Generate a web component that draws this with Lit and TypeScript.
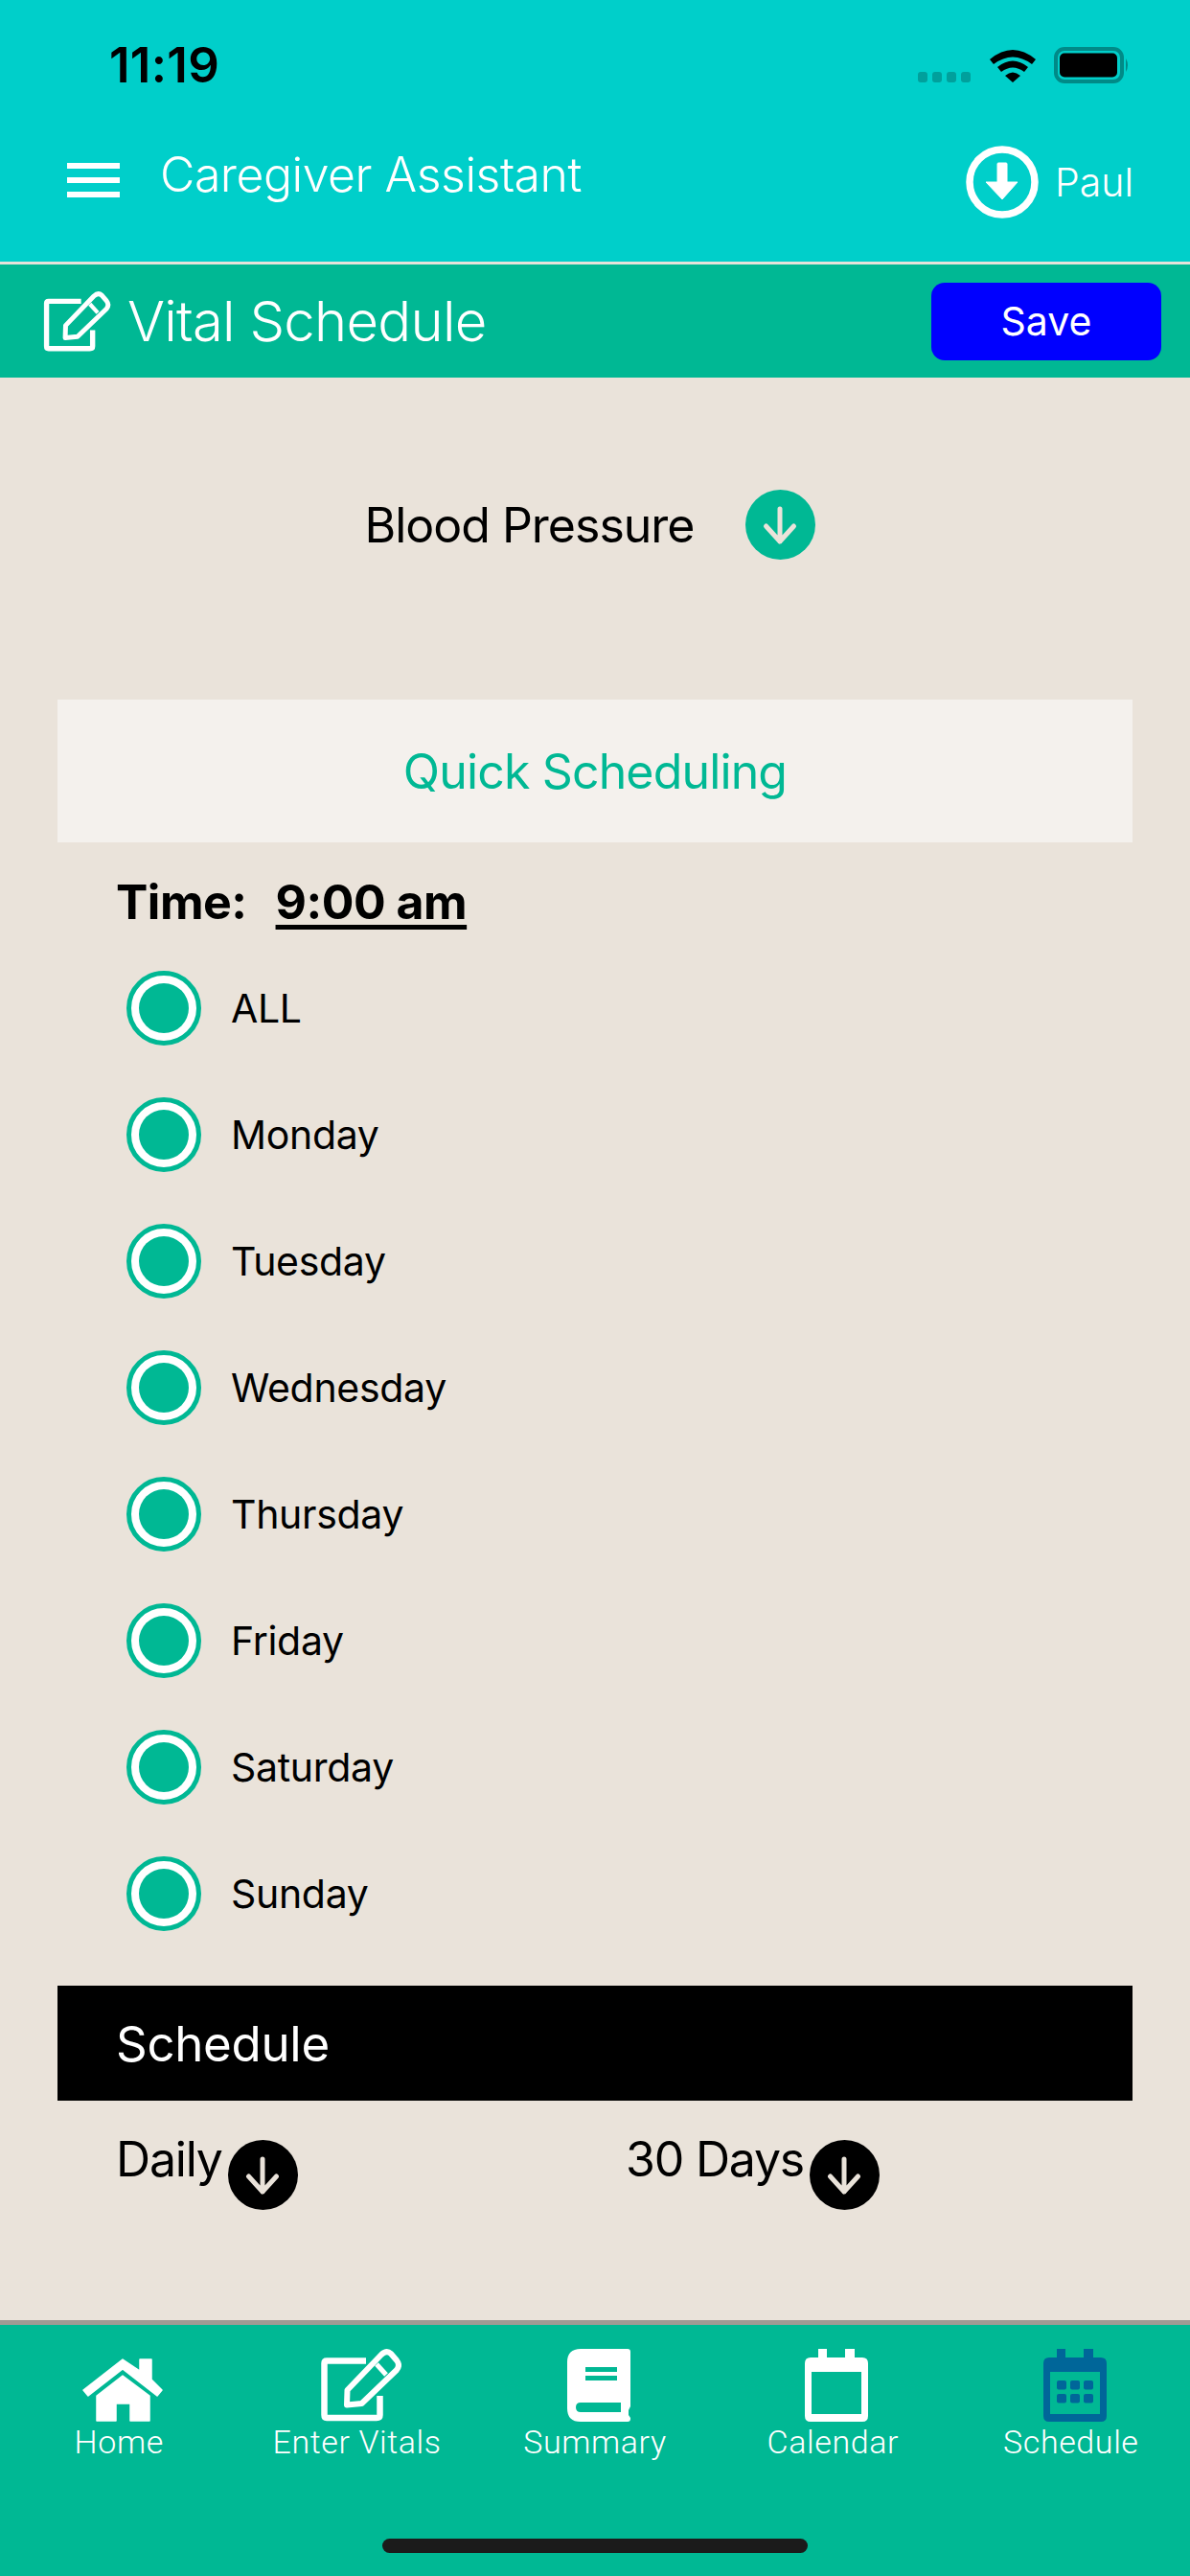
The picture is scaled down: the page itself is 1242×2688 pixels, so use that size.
import { LitElement, html, css, svg } from 'lit'
import { customElement } from 'lit/decorators.js'

const DAYS = ['ALL', 'Monday', 'Tuesday', 'Wednesday', 'Thursday', 'Friday', 'Saturday', 'Sunday']

const editPaths = svg`
	<path d="M47 12.500 H6 Q3.500 12.500 3.500 15 V69 Q3.500 72 6 72 H58 Q61.500 72 61.500 69 V49" fill="none" stroke="currentColor" stroke-width="6.500"/>
	<path d="M27.500 43 L63 6 Q68.500 1 73 5 L79 12 Q83 17 79 22 L42.500 57 L27 58.500 Z" fill="none" stroke="currentColor" stroke-width="6" stroke-linejoin="round"/>
	<path d="M58 16 L68 27" fill="none" stroke="currentColor" stroke-width="5"/>
`

const arrowDown = (color: string) => svg`
	<path d="M36 20 V54 M21.500 38 L36 54 L50.500 38" fill="none" stroke=${color} stroke-width="5" stroke-linecap="round" stroke-linejoin="round"/>
`

@customElement('app-root')
export class AppRoot extends LitElement {
	static styles = css`
		:host {
			display: flex;
			flex-direction: column;
			min-height: 100vh;
			background: #eae3da;
			font-family: Inter, 'Liberation Sans', sans-serif;
			color: #000;
		}

		.header {
			background: #00cfca;
			color: #fff;
			border-bottom: 3px solid #e6e2da;
		}

		.status {
			display: flex;
			align-items: center;
			height: 134px;
			padding: 0 64px 0 114px;
		}

		.time {
			font-size: 51px;
			font-weight: 600;
			letter-spacing: 0.3px;
			color: #000;
			flex: 1;
		}

		.status-icons {
			display: block;
			margin-top: 4px;
		}

		.nav {
			display: flex;
			align-items: center;
			height: 111px;
			padding: 0 59px 28px 70px;
		}

		.burger {
			display: flex;
			flex-direction: column;
			gap: 9px;
			width: 55px;
			margin: -4px 42px 0 0;
		}

		.burger span {
			height: 6px;
			background: #fff;
		}

		.app-name {
			flex: 1;
			font-size: 50px;
			font-weight: 300;
			letter-spacing: -0.5px;
			margin-top: -16px;
		}

		.user-icon {
			width: 76px;
			height: 76px;
			margin-right: 17px;
		}

		.user-name {
			font-size: 41px;
			font-weight: 300;
		}

		.title-bar {
			display: flex;
			align-items: center;
			height: 118px;
			padding: 0 30px 0 45px;
			background: #00b894;
			color: #fff;
		}

		.title-icon {
			width: 71px;
			height: 63px;
			margin-right: 17px;
			color: #fff;
		}

		.title {
			flex: 1;
			font-size: 58px;
			font-weight: 300;
			letter-spacing: -0.75px;
		}

		.save {
			width: 240px;
			height: 81px;
			border: none;
			border-radius: 14px;
			background: #00f;
			color: #fff;
			font-family: inherit;
			font-size: 41px;
			font-weight: 400;
		}

		.main {
			flex: 1;
			display: flex;
			flex-direction: column;
			padding: 117px 60px 0;
		}

		.picker {
			display: flex;
			align-items: center;
			justify-content: center;
			gap: 53px;
			height: 73px;
			padding-right: 11px;
			font-size: 50px;
			font-weight: 400;
			letter-spacing: -1px;
		}

		.arrow {
			width: 73px;
			height: 73px;
			flex: none;
		}

		.quick {
			display: flex;
			align-items: center;
			justify-content: center;
			height: 149px;
			margin-top: 146px;
			background: #f4f1ed;
			color: #00b894;
			font-size: 50px;
			font-weight: 400;
			letter-spacing: -0.85px;
		}

		.time-row {
			display: flex;
			gap: 30px;
			height: 56px;
			padding-left: 61px;
			margin: 34px 0 17px;
			font-size: 50px;
			font-weight: 700;
			line-height: 56px;
			letter-spacing: -0.5px;
		}

		.time-value {
			text-decoration: underline;
			text-decoration-thickness: 5px;
			text-underline-offset: 6px;
		}

		.day {
			display: flex;
			align-items: center;
			height: 132px;
			padding-left: 72px;
			font-size: 41px;
			letter-spacing: -0.3px;
		}

		.radio {
			box-sizing: border-box;
			width: 78px;
			height: 78px;
			margin-right: 31px;
			border: 5px solid #00b894;
			border-radius: 50%;
			background: #fff;
			padding: 8px;
		}

		.radio span {
			display: block;
			width: 100%;
			height: 100%;
			border-radius: 50%;
			background: #00b894;
		}

		.schedule-head {
			display: flex;
			align-items: center;
			height: 120px;
			margin-top: 30px;
			padding-left: 61px;
			background: #000;
			color: #fff;
			font-size: 51px;
			font-weight: 400;
			letter-spacing: -0.3px;
		}

		.schedule-row {
			display: grid;
			grid-template-columns: 532px 1fr;
			padding: 31px 0 0 61px;
			font-size: 50px;
			line-height: 60px;
			font-weight: 400;
			letter-spacing: -1.2px;
		}

		.option {
			display: flex;
			align-items: flex-start;
			gap: 6px;
		}

		.option .arrow {
			margin-top: 10px;
		}

		.footer {
			display: grid;
			grid-template-columns: repeat(5, 1fr);
			height: 262px;
			border-top: 5px solid #a09a94;
			background: #00b894;
			color: #fff;
			position: relative;
		}

		.tab {
			display: flex;
			flex-direction: column;
			align-items: center;
			padding-top: 25px;
			font-family: Roboto, sans-serif;
			font-size: 34px;
			font-weight: 300;
			letter-spacing: 0.6px;
		}

		.tab-icon {
			display: flex;
			align-items: flex-end;
			justify-content: center;
			height: 76px;
			margin-left: 8px;
		}

		.tab.active .tab-icon {
			color: #006699;
		}

		.tab-label {
			margin-top: 1px;
		}

		.home-bar {
			position: absolute;
			left: 399px;
			bottom: 24px;
			width: 444px;
			height: 15px;
			border-radius: 8px;
			background: #1b1b1b;
		}
	`

	renderStatusIcons() {
		return html`
			<svg class="status-icons" width="220" height="40" viewBox="0 0 220 40">
				<g fill="#00a09c">
					<rect x="0" y="26" width="10" height="11" rx="3" />
					<rect x="15" y="26" width="10" height="11" rx="3" />
					<rect x="30" y="26" width="10" height="11" rx="3" />
					<rect x="45" y="26" width="10" height="11" rx="3" />
				</g>
				<path d="M75 13 Q99 -7 123 13 L119 18 Q99 3 79 18 Z M83 21 Q99 8 115 21 L111 26 Q99 17 87 26 Z M91 30 Q99 23 107 30 L99 37 Z" fill="#000" />
				<rect x="144" y="2" width="69" height="34" rx="9" fill="none" stroke="#008a87" stroke-width="4" />
				<rect x="148" y="6.500" width="60" height="25" rx="5" fill="#000" />
				<path d="M217 12 Q221 19 217 26 Z" fill="#008a87" />
			</svg>
		`
	}

	renderTab(label: string, icon: unknown, active = false) {
		return html`
			<div class="tab ${active ? 'active' : ''}">
				<div class="tab-icon">${icon}</div>
				<div class="tab-label">${label}</div>
			</div>
		`
	}

	render() {
		const home = html`<svg width="84" height="66" viewBox="0 0 84 66" fill="currentColor" stroke="currentColor" stroke-width="1.500" stroke-linejoin="round">
			<path d="M42 1 L60 13 V1 H72 V22 L83 33 L78 39 L42 11 L6 39 L1 33 Z" />
			<path d="M42 18 L70 39 V65 H50 V47 H35 V65 H15 V39 Z" />
		</svg>`
		const edit = html`<svg width="84" height="76" viewBox="0 0 84 76">${editPaths}</svg>`
		const book = html`<svg width="66" height="76" viewBox="0 0 66 76" fill="currentColor">
			<path fill-rule="evenodd" d="M14 0 H63 Q66 0 66 3 V60 L64 64 V69 L66 72 V73 Q66 76 63 76 H14 Q0 76 0 62 V14 Q0 0 14 0 Z M19 19 V24 H52 V19 Z M19 28 V33 H52 V28 Z M14 56 Q9 56 9 61 Q9 66 14 66 H56 V56 Z" />
		</svg>`
		const calendarBody = svg`
			<path fill-rule="evenodd" d="M14 0 H23 V9 H42 V0 H52 V9 H60 Q66 9 66 15 V70 Q66 76 60 76 H6 Q0 76 0 70 V15 Q0 9 6 9 H14 Z M7 24 V68 H59 V24 Z" />
		`
		const calendar = html`<svg width="66" height="76" viewBox="0 0 66 76" fill="currentColor">${calendarBody}</svg>`
		const schedule = html`<svg width="66" height="76" viewBox="0 0 66 76" fill="currentColor">
			${calendarBody}
			${[14, 28, 42].map(
				(x) => svg`
					<rect x=${x} y="33" width="10" height="9.500" rx="2" />
					<rect x=${x} y="47" width="10" height="9.500" rx="2" />
				`
			)}
		</svg>`

		return html`
			<div class="header">
				<div class="status">
					<div class="time">11:19</div>
					${this.renderStatusIcons()}
				</div>
				<div class="nav">
					<div class="burger"><span></span><span></span><span></span></div>
					<div class="app-name">Caregiver Assistant</div>
					<svg class="user-icon" viewBox="0 0 76 76">
						<circle cx="38" cy="38" r="34" fill="none" stroke="#fff" stroke-width="7.500" />
						<path d="M33 19 Q33 18 34 18 H42 Q43 18 43 19 V38 H54 L38 56 L21 38 H33 Z" fill="#fff" stroke="#fff" stroke-width="1" stroke-linejoin="round" />
					</svg>
					<div class="user-name">Paul</div>
				</div>
			</div>

			<div class="title-bar">
				<svg class="title-icon" viewBox="0 0 84 76">${editPaths}</svg>
				<div class="title">Vital Schedule</div>
				<button class="save">Save</button>
			</div>

			<div class="main">
				<div class="picker">
					<span>Blood Pressure</span>
					<svg class="arrow" viewBox="0 0 73 73">
						<circle cx="36.500" cy="36.500" r="36.500" fill="#00b894" />
						${arrowDown('#eae3da')}
					</svg>
				</div>

				<div class="quick">Quick Scheduling</div>

				<div class="time-row">
					<span>Time:</span>
					<span class="time-value">9:00 am</span>
				</div>

				<div class="days">
					${DAYS.map(
						(d) => html`
							<div class="day">
								<div class="radio"><span></span></div>
								<span>${d}</span>
							</div>
						`
					)}
				</div>

				<div class="schedule-head">Schedule</div>
				<div class="schedule-row">
					${['Daily', '30 Days'].map(
						(label) => html`
							<div class="option">
								<span>${label}</span>
								<svg class="arrow" viewBox="0 0 73 73">
									<circle cx="36.500" cy="36.500" r="36.500" fill="#000" />
									${arrowDown('#eae3da')}
								</svg>
							</div>
						`
					)}
				</div>
			</div>

			<div class="footer">
				${this.renderTab('Home', home)}
				${this.renderTab('Enter Vitals', edit)}
				${this.renderTab('Summary', book)}
				${this.renderTab('Calendar', calendar)}
				${this.renderTab('Schedule', schedule, true)}
				<div class="home-bar"></div>
			</div>
		`
	}
}
